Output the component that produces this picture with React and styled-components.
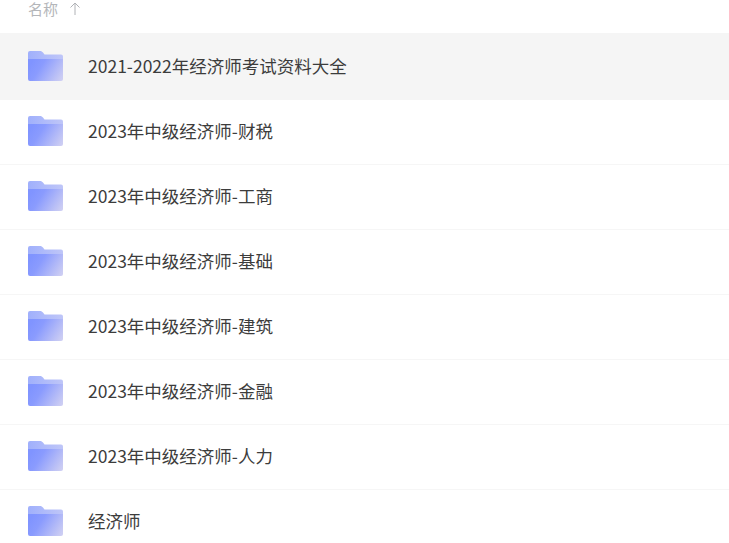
import styled, { createGlobalStyle } from 'styled-components'

const GlobalStyle = createGlobalStyle`
  html, body {
    margin: 0;
    height: 100%;
    background: #fff;
    overflow: hidden;
  }
  body {
    font-family: "Noto Sans CJK SC", "Liberation Sans", sans-serif;
  }
`

const Page = styled.div`
  width: 729px;
  height: 543px;
  overflow: hidden;
`

const Header = styled.div`
  box-sizing: border-box;
  height: 33px;
  padding: 1px 0 0 28px;
  display: flex;
  align-items: flex-start;
  gap: 11px;
  color: #b4b6ba;
  font-family: "Liberation Sans", "Noto Sans CJK SC", sans-serif;
  font-size: 15px;
  line-height: 18px;
`

const SortIcon = styled.svg`
  width: 12px;
  height: 14px;
  margin-top: 1px;
  color: #b0b2b6;
`

const Row = styled.div`
  box-sizing: border-box;
  height: ${p => (p.$active ? 67 : 65)}px;
  display: flex;
  align-items: center;
  gap: 25px;
  padding: 0 0 ${p => (p.$active ? 1 : 2)}px 28px;
  background: ${p => (p.$active ? '#f5f5f5' : '#fff')};
  border-bottom: ${p => (p.$active ? 'none' : '1px solid #f6f6f6')};
`

const Name = styled.span`
  font-size: 17.5px;
  color: #3c3c3c;
  line-height: 24px;
  white-space: nowrap;
`

const folders = [
  '2021-2022年经济师考试资料大全',
  '2023年中级经济师-财税',
  '2023年中级经济师-工商',
  '2023年中级经济师-基础',
  '2023年中级经济师-建筑',
  '2023年中级经济师-金融',
  '2023年中级经济师-人力',
  '经济师',
]

function FolderIcon({ id }) {
  return (
    <svg width="35" height="30" viewBox="0 0 35 30" style={{ flexShrink: 0 }}>
      <defs>
        <linearGradient id={id} x1="0" y1="0.4" x2="1" y2="0.8">
          <stop offset="0" stopColor="#8094ff" />
          <stop offset="0.3" stopColor="#8a9bfe" />
          <stop offset="1" stopColor="#cccdf3" />
        </linearGradient>
        <linearGradient id={`${id}-back`} x1="0" y1="0" x2="1" y2="0">
          <stop offset="0" stopColor="#a0b0fc" />
          <stop offset="1" stopColor="#bfc6f8" />
        </linearGradient>
      </defs>
      <path
        d="M2 0h10c1.400 0 2.200.600 3 1.500l1.500 2H33a2 2 0 0 1 2 2V10H0V2a2 2 0 0 1 2-2z"
        fill={`url(#${id}-back)`}
      />
      <path d="M0 8h35v20a2 2 0 0 1-2 2H2a2 2 0 0 1-2-2z" fill={`url(#${id})`} />
    </svg>
  )
}

export default function App() {
  return (
    <Page>
      <GlobalStyle />
      <Header>
        <span>名称</span>
        <SortIcon viewBox="0 0 12 14" fill="none" stroke="currentColor" strokeWidth="1">
          <path d="M6 13V1M1.500 5.500L6 1l4.500 4.500" />
        </SortIcon>
      </Header>
      {folders.map((name, i) => (
        <Row key={name} $active={i === 0}>
          <FolderIcon id={`folder-${i}`} />
          <Name>{name}</Name>
        </Row>
      ))}
    </Page>
  )
}
